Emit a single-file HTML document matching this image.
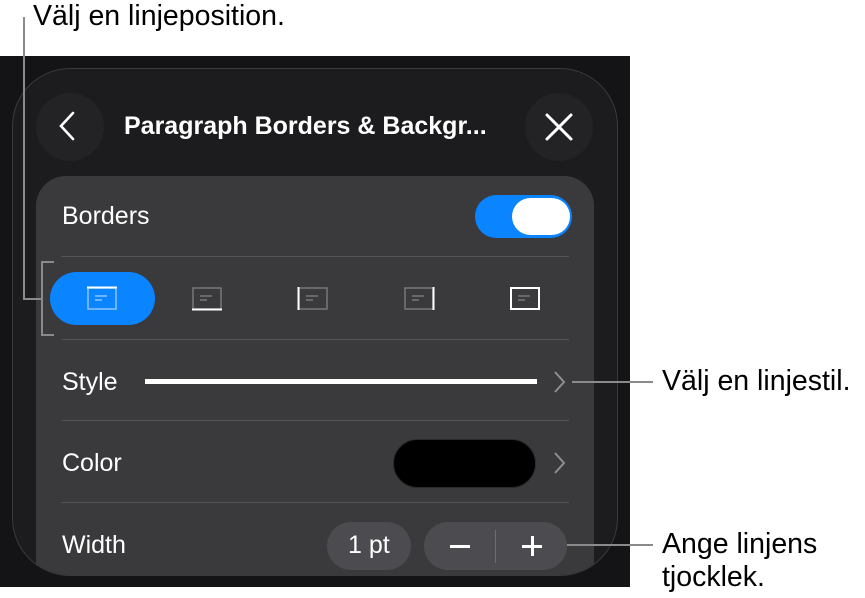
<!DOCTYPE html>
<html><head><meta charset="utf-8"><style>
*{margin:0;padding:0;box-sizing:border-box}
html,body{width:865px;height:598px;overflow:hidden}
body{background:#fff;position:relative;font-family:"Liberation Sans",sans-serif}
.a{position:absolute}
.t{color:#fff;font-size:25px;line-height:28px}
.lab{color:#000;font-size:28.5px;position:absolute;line-height:33px}
.sep{position:absolute;left:61px;width:508px;height:1px;background:#545458}
.ln{position:absolute;background:#8a8a8a}
</style></head><body>
<div class="a" style="left:0;top:56px;width:630px;height:531px;background:#141416"></div>
<div class="a" style="left:12px;top:68px;width:606px;height:508px;border-radius:58px;background:#1c1c1e;border:1px solid #3a3a3c;overflow:hidden">
 <div class="a" style="left:23px;top:107px;width:558px;height:420px;border-radius:30px;background:#3a3a3c"></div>
</div>
<div class="a" style="left:36px;top:93px;width:68px;height:68px;border-radius:50%;background:#232325"></div>
<svg class="a" style="left:56px;top:110px" width="24" height="34"><path d="M17 3 L5 16 L17 29" stroke="#fff" stroke-width="2.6" fill="none" stroke-linecap="round"/></svg>
<div class="a" style="left:525px;top:93px;width:68px;height:68px;border-radius:50%;background:#232325"></div>
<svg class="a" style="left:543px;top:111px" width="32" height="32"><path d="M4 4 L28 28 M28 4 L4 28" stroke="#fff" stroke-width="3" stroke-linecap="round"/></svg>
<div class="a t" style="left:124px;top:112px;font-weight:bold;font-size:25px">Paragraph Borders &amp; Backgr...</div>
<div class="a t" style="left:62px;top:202px">Borders</div>
<div class="a" style="left:475px;top:195px;width:97px;height:43px;border-radius:22px;background:#0a84ff"></div>
<div class="a" style="left:512px;top:198px;width:58px;height:37px;border-radius:19px;background:#fff"></div>
<div class="sep" style="top:256px"></div>
<div class="a" style="left:50px;top:272px;width:105px;height:53px;border-radius:27px;background:#0a84ff"></div>
<svg class="a" style="left:0;top:280px" width="600" height="36">
<g fill="none" stroke-width="1.5">
 <rect x="88" y="8" width="28" height="21" stroke="#8ec4ff"/><path d="M87 7.5 H117" stroke="#fff" stroke-width="2"/>
 <path d="M95 16 H107 M95 20 H102" stroke="#8ec4ff"/>
 <rect x="193" y="8" width="28" height="21" stroke="#777"/><path d="M192 29.5 H222" stroke="#fff" stroke-width="2"/>
 <path d="M200 16 H212 M200 20 H207" stroke="#777"/>
 <rect x="299" y="8" width="28" height="21" stroke="#777"/><path d="M298.5 7 V30" stroke="#fff" stroke-width="2"/>
 <path d="M306 16 H318 M306 20 H313" stroke="#777"/>
 <rect x="405" y="8" width="28" height="21" stroke="#777"/><path d="M433.5 7 V30" stroke="#fff" stroke-width="2"/>
 <path d="M412 16 H424 M412 20 H419" stroke="#777"/>
 <rect x="511" y="8" width="28" height="21" stroke="#fff" stroke-width="2"/>
 <path d="M518 16 H530 M518 20 H525" stroke="#777"/>
</g></svg>
<div class="sep" style="top:339px"></div>
<div class="a t" style="left:62px;top:368px">Style</div>
<div class="a" style="left:145px;top:379px;width:392px;height:5px;background:#fff"></div>
<svg class="a" style="left:552px;top:370px" width="16" height="24"><path d="M3 2 L12 12 L3 22" stroke="#8e8e93" stroke-width="2" fill="none"/></svg>
<div class="sep" style="top:420px"></div>
<div class="a t" style="left:62px;top:449px">Color</div>
<div class="a" style="left:393px;top:439px;width:143px;height:49px;border-radius:25px;background:#000;border:1px solid #2a2a2a"></div>
<svg class="a" style="left:552px;top:451px" width="16" height="24"><path d="M3 2 L12 12 L3 22" stroke="#8e8e93" stroke-width="2" fill="none"/></svg>
<div class="sep" style="top:502px"></div>
<div class="a t" style="left:62px;top:531px">Width</div>
<div class="a" style="left:327px;top:522px;width:84px;height:48px;border-radius:24px;background:#4c4c50"></div>
<div class="a t" style="left:348px;top:531px">1 pt</div>
<div class="a" style="left:424px;top:522px;width:143px;height:48px;border-radius:24px;background:#4c4c50"></div>
<div class="a" style="left:495px;top:530px;width:1px;height:33px;background:#6e6e72"></div>
<div class="a" style="left:450px;top:545px;width:20px;height:3px;background:#fff"></div>
<div class="a" style="left:522px;top:545px;width:20px;height:3px;background:#fff"></div>
<div class="a" style="left:530.5px;top:536px;width:3px;height:20px;background:#fff"></div>
<div class="lab" style="left:33px;top:0px">Välj en linjeposition.</div>
<div class="ln" style="left:23px;top:17px;width:2px;height:283px"></div>
<div class="ln" style="left:23px;top:298px;width:20px;height:2px"></div>
<div class="ln" style="left:41px;top:261px;width:2px;height:75px"></div>
<div class="ln" style="left:41px;top:261px;width:13px;height:2px"></div>
<div class="ln" style="left:41px;top:334px;width:13px;height:2px"></div>
<div class="ln" style="left:572px;top:381px;width:81px;height:2px"></div>
<div class="lab" style="left:662px;top:365px">Välj en linjestil.</div>
<div class="ln" style="left:567px;top:544px;width:86px;height:2px"></div>
<div class="lab" style="left:662px;top:528px">Ange linjens<br>tjocklek.</div>
</body></html>
